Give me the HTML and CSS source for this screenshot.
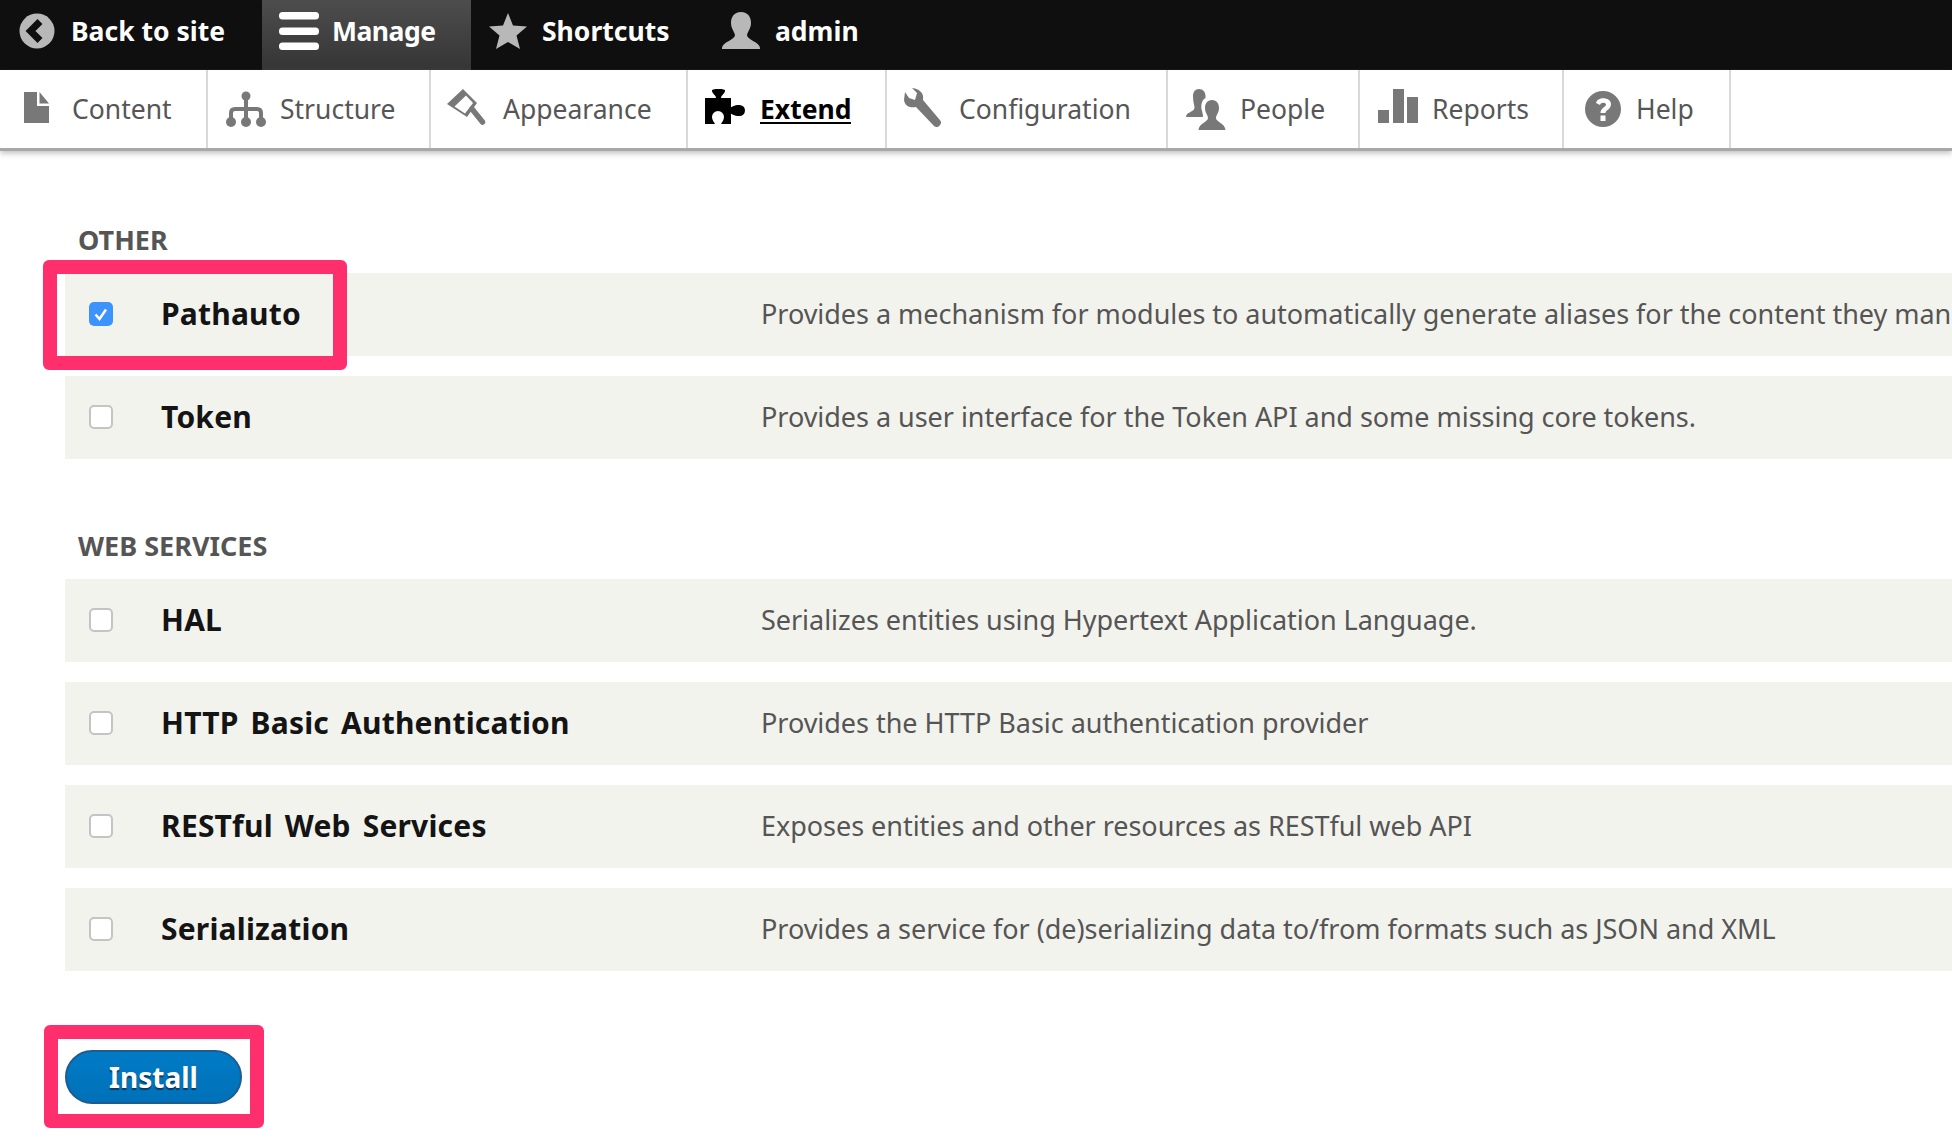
FILE: index.html
```html
<!DOCTYPE html>
<html lang="en">
<head>
<meta charset="utf-8">
<title>Extend</title>
<link rel="stylesheet" href="styles.css">
</head>
<body>
<header class="toolbar">
  <a class="bar-item bar-back"><svg class="bar-icon" viewBox="0 0 38 38"><circle cx="18" cy="19" r="17.500"/><path class="cut" d="M21 9.500 L11.500 19 L21 28.500"/></svg>Back to site</a>
  <a class="bar-item bar-manage"><svg class="bar-icon-menu" viewBox="0 0 40 38"><rect y="0" width="40" height="7.500" rx="3.500"/><rect y="15.500" width="40" height="7.500" rx="3.500"/><rect y="30.500" width="40" height="7.500" rx="3.500"/></svg>Manage</a>
  <a class="bar-item bar-shortcuts"><svg class="bar-icon bar-icon-star" viewBox="0 0 40 38"><path d="M20 1 L25 13.500 L39 14.500 L28.500 23.500 L32 37 L20 30 L8 37 L11.500 23.500 L1 14.500 L15 13.500 Z"/></svg>Shortcuts</a>
  <a class="bar-item bar-admin"><svg class="bar-icon" viewBox="0 0 38 38"><path d="M19 0 C26 0 29 5 29 11 C29 16 26 19 25 23 C25 28 38 30 38 36 V37 H0 V36 C0 30 13 28 13 23 C12 19 9 16 9 11 C9 5 12 0 19 0 Z"/></svg>admin</a>
</header>
<nav class="tabs">
  <a class="tab"><svg class="tab-icon" viewBox="0 0 40 40"><path d="M6 3 H19 V17 H31 V34 H6 Z M21.500 3 L31 14.500 H21.500 Z"/></svg>Content</a>
  <a class="tab"><svg class="tab-icon" viewBox="0 0 40 40"><circle cx="20" cy="7" r="4.500"/><rect x="18" y="7" width="4" height="26"/><path class="line" d="M5 33 V24 Q5 20 9 20 H31 Q35 20 35 24 V33"/><circle cx="5" cy="33" r="5"/><circle cx="20" cy="33" r="5"/><circle cx="35" cy="33" r="5"/></svg>Structure</a>
  <a class="tab"><svg class="tab-icon" viewBox="2 0 40 40"><path fill-rule="evenodd" d="M0 15 L16 0 L30 14 L20 28 Z M7.500 17.500 L19 6.500 L26 14 L18 24.500 Z"/><path class="line-wide" d="M25 20 L35.500 33"/></svg>Appearance</a>
  <a class="tab tab-active"><svg class="tab-icon" viewBox="1 0 40 40"><path d="M0 9 H11 C11 6 7 5 7 1.500 C7 0.500 9 0 13.500 0 C18 0 20 0.500 20 1.500 C20 5 16 6 16 9 H26 V18 C28 18 28 16 34.500 16 A5.500 5.500 0 0 1 34.500 27 C28 27 28 25 26 25 V35 H16 C17 33 19 31 19 28 A6 6 0 0 0 7 28 C7 31 9 33 10 35 H0 Z"/></svg><span class="tab-label">Extend</span></a>
  <a class="tab"><svg class="tab-icon" viewBox="3 1 40 40"><path d="M3 4 L2 12 C3 19 9 20 14 19 L32 38 C34 40 37 39 38 37 C40 35 39 33 37 31 L21 12 C22 6 19 1 10 0 L15 5 L13 12 L7 10 Z"/></svg>Configuration</a>
  <a class="tab"><svg class="tab-icon" viewBox="0 0 40 40"><path d="M13 0 C17 0 19.500 3 19.500 7 V9 C16 11 15 15 15.500 20 C16 23 17 24 17 28 H0 C0 23 8 23 8.500 19 C8.500 16 7 13 7 7 C7 3 9 0 13 0 Z"/><path d="M26 11 C31 11 33 15 33 19 C33 24 30 26 30 29 C30 33 39 34 39.500 41 H12.500 C13 34 22 33 22 29 C22 26 19 24 19 19 C19 15 21 11 26 11 Z"/></svg>People</a>
  <a class="tab"><svg class="tab-icon" viewBox="0 0 40 40"><rect x="0" y="21" width="11" height="13"/><rect x="15" y="0" width="11" height="34"/><rect x="29" y="8" width="11" height="26"/></svg>Reports</a>
  <a class="tab"><svg class="tab-icon" viewBox="-3 -2 40 40"><path fill-rule="evenodd" d="M18 0 A18 18 0 1 1 18 36 A18 18 0 1 1 18 0 Z M11 12 L15 14 C15.500 11.500 20.500 11 21 13.500 C21 16 15.500 17 15.500 22 H20.500 C20.500 19 26 18.500 26 13 C26 6 12.500 5 11 12 Z M15.500 24.500 V30 H20.500 V24.500 Z"/></svg>Help</a>
</nav>
<main class="page">
  <section class="group group-other">
    <h2 class="group-title">OTHER</h2>
    <div class="rows">
      <div class="row row-marked"><span class="check check-on"><svg viewBox="0 0 24 24"><path d="M6.500 12.500 L10.500 17 L17 7.500"/></svg></span><span class="name">Pathauto</span><span class="desc">Provides a mechanism for modules to automatically generate aliases for the content they manage.</span></div>
      <div class="row"><span class="check"></span><span class="name">Token</span><span class="desc">Provides a user interface for the Token API and some missing core tokens.</span></div>
    </div>
  </section>
  <section class="group group-web">
    <h2 class="group-title">WEB SERVICES</h2>
    <div class="rows">
      <div class="row"><span class="check"></span><span class="name">HAL</span><span class="desc">Serializes entities using Hypertext Application Language.</span></div>
      <div class="row"><span class="check"></span><span class="name">HTTP Basic Authentication</span><span class="desc">Provides the HTTP Basic authentication provider</span></div>
      <div class="row"><span class="check"></span><span class="name">RESTful Web Services</span><span class="desc">Exposes entities and other resources as RESTful web API</span></div>
      <div class="row"><span class="check"></span><span class="name">Serialization</span><span class="desc">Provides a service for (de)serializing data to/from formats such as JSON and XML</span></div>
    </div>
  </section>
  <div class="actions"><button class="install">Install</button></div>
</main>
</body>
</html>
```
FILE: styles.css
```css
*, *::before, *::after { box-sizing: border-box; }
html, body { margin: 0; height: 1140px; overflow: hidden; background: #fff; }
body { font-family: "Noto Sans", "Open Sans", sans-serif; }
.toolbar { display: grid; grid-template-columns: 262px 209px 210px auto; justify-content: start; height: 70px; background: #0f0f0f; }
.bar-item { display: flex; align-items: center; padding-bottom: 9px; color: #fff; font-weight: 700; font-size: 26.500px; }
.bar-back { padding-left: 19px; gap: 14px; }
.bar-manage { padding-left: 17px; gap: 13px; letter-spacing: -0.5px; background: linear-gradient(#4d4d4d, #353535); }
.bar-shortcuts { padding-left: 17px; gap: 14px; }
.bar-admin { padding-left: 41px; gap: 15px; }
.bar-icon { width: 38px; height: 38px; fill: #b8b8b8; }
.bar-icon-star { width: 40px; }
.bar-icon .cut { fill: none; stroke: #0f0f0f; stroke-width: 7; }
.bar-icon-menu { width: 40px; height: 38px; fill: #fff; }
.tabs { display: grid; grid-template-columns: 208px 223px 257px 199px 281px 192px 204px 167px; justify-content: start; height: 78px; background: #fff; position: relative; box-shadow: 0 3px 0 #a8a8a8, 0 5px 6px #bbb; }
.tab { display: flex; align-items: center; gap: 14px; padding-left: 18px; font-size: 26.500px; color: #565656; border-right: 2px solid #d9d9d9; }
.tab-icon { width: 40px; height: 40px; fill: #787878; flex: none; overflow: visible; }
.tab-icon .line { fill: none; stroke: #787878; stroke-width: 4; }
.tab-icon .line-wide { fill: none; stroke: #787878; stroke-width: 5.500; stroke-linecap: round; }
.tab-active { color: #000; font-weight: 700; }
.tab-active .tab-icon { fill: #000; }
.tab-label { margin-top: 2px; border-bottom: 2px solid #000; line-height: 26px; }
.page { padding: 0 0 0 65px; }
.group-title { margin: 0 0 0 13px; font-size: 27px; line-height: 34px; font-weight: 700; color: #555; }
.group-other { padding-top: 75px; }
.group-other .group-title { margin-bottom: 16px; }
.group-web { padding-top: 70px; }
.group-web .group-title { margin-bottom: 16px; }
.rows { display: flex; flex-direction: column; gap: 20px; }
.row { position: relative; display: grid; grid-template-columns: 72px 600px 1fr; align-items: center; height: 83px; padding: 0 0 2px 24px; background: #f3f3ee; }
.row-marked::after { content: ""; position: absolute; z-index: 1; left: -22px; top: -13px; width: 304px; height: 110px; border: 14px solid #ff2e6c; border-radius: 6px; }
.check { display: block; width: 24px; height: 24px; background: #fff; border: 2px solid #c4c4c4; border-radius: 5px; }
.check svg { display: block; }
.check-on { background: #3b93fb; border: 0; }
.check-on path { fill: none; stroke: #fff; stroke-width: 2.500; }
.name { font-size: 30px; font-weight: 700; color: #141414; white-space: nowrap; letter-spacing: 0.2px; word-spacing: 4px; }
.desc { font-size: 27px; color: #555; white-space: nowrap; overflow: hidden; letter-spacing: -0.03px; }
.actions { position: relative; display: inline-block; margin-top: 79px; }
.actions::after { content: ""; position: absolute; left: -21px; top: -25px; width: 220px; height: 103px; border: 14px solid #ff2e6c; border-radius: 6px; }
.install { display: block; width: 177px; height: 54px; padding: 0; border: 2px solid #1e5c90; border-radius: 27px; background: linear-gradient(#007bc6, #0071b8); color: #fff; font: 700 28px "Noto Sans", sans-serif; text-shadow: 0 2px 1px #0a3a60; }
```
